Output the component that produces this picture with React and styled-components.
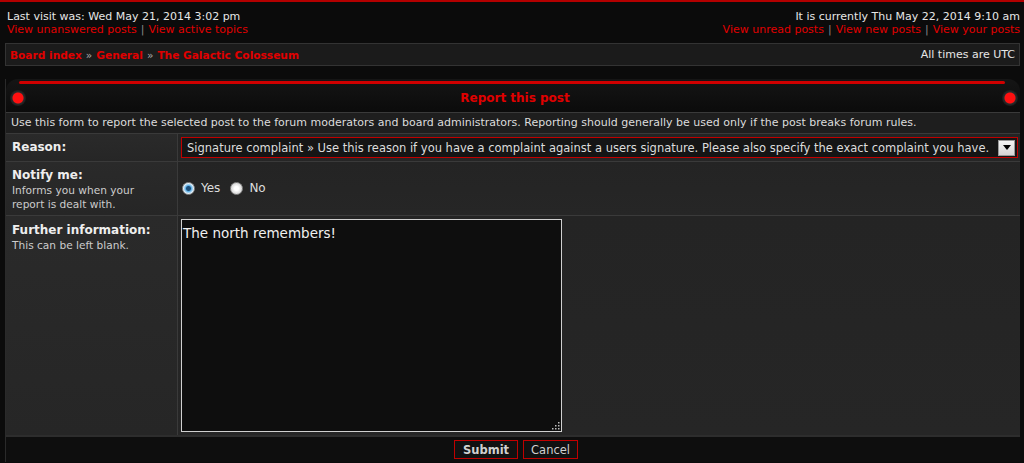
import React from "react";
import styled, { createGlobalStyle } from "styled-components";

const Global = createGlobalStyle`
  html, body { margin: 0; padding: 0; background: #0b0b0b; }
  body { font-family: "DejaVu Sans", Verdana, sans-serif; color: #e6e6e6; }
  * { box-sizing: border-box; }
`;

const Page = styled.div`
  border-top: 2px solid #b30000;
  padding: 0 4px 0 5px;
  min-height: 463px;
`;

const TopBar = styled.div`
  display: flex;
  justify-content: space-between;
  padding: 8px 0 0 2px;
  font-size: 11px;
  line-height: 13px;
`;

const Col = styled.div`
  text-align: ${(p) => p.$align || "left"};
`;

const Link = styled.a`
  color: #e00000;
  text-decoration: none;
  font-weight: ${(p) => (p.$bold ? "bold" : "normal")};
`;

const Sep = styled.span`
  color: #888;
  margin: 0 4px;
`;

const Crumbs = styled.div`
  margin-top: 7px;
  height: 23px;
  background: #1b1b1b;
  border: 1px solid #333;
  display: flex;
  align-items: center;
  justify-content: space-between;
  padding: 0 4px;
  font-size: 11px;
`;

const CrumbTrail = styled.span`
  font-size: 10.6px;
`;

const Raquo = styled.span`
  color: #aaa;
  margin: 0 4px;
`;

const Panel = styled.div`
  margin-top: 13px;
  border-left: 1px solid #2a2a2a;
`;

const PanelHead = styled.div`
  position: relative;
  height: 33px;
  border-radius: 12px 12px 0 0;
  background: linear-gradient(#151515, #0b0b0b);
  display: grid;
  grid-template-columns: 24px 1fr 20px;
  align-items: center;
  padding-top: 5px;
  &::before {
    content: "";
    position: absolute;
    left: 13px;
    right: 15px;
    top: 2px;
    height: 3px;
    border-radius: 2px;
    background: #d00000;
  }
`;

const Dot = styled.span`
  justify-self: center;
  width: 16px;
  height: 16px;
  border-radius: 50%;
  background: radial-gradient(circle, #ff1010 0 5px, #2a2a2a 6px, #1a1a1a 8px);
`;

const Title = styled.div`
  text-align: center;
  color: #e00000;
  font-weight: bold;
  font-size: 12px;
`;

const Table = styled.div`
  display: grid;
  grid-template-columns: 171px 1fr;
  background: #3a3a3a;
  gap: 1px;
  border-top: 1px solid #3a3a3a;
`;

const Intro = styled.div`
  grid-column: 1 / -1;
  background: #1e1e1e;
  font-size: 11px;
  padding: 3px 5px;
  height: 20px;
  color: #dcdcdc;
  white-space: nowrap;
`;

const Label = styled.div`
  background: linear-gradient(#2a2a2a, #262626);
  padding: ${(p) => p.$pad || "5px 6px"};
  height: ${(p) => p.$h}px;
`;

const LabelTitle = styled.div`
  font-weight: bold;
  font-size: 12px;
  color: #eee;
  line-height: 15px;
`;

const LabelNote = styled.div`
  font-size: 10.6px;
  color: #ccc;
  line-height: 14px;
`;

const Value = styled.div`
  background: linear-gradient(#242424, #262626);
  padding: ${(p) => p.$pad || "3px 2px 3px 3px"};
  height: ${(p) => p.$h}px;
  display: flex;
  align-items: flex-start;
`;

const Select = styled.div`
  flex: 1;
  height: 21px;
  border: 1px solid #c00000;
  background: #151515;
  display: flex;
  align-items: center;
  padding: 0 2px 0 5px;
  font-size: 11.5px;
  color: #ddd;
  white-space: nowrap;
  overflow: hidden;
`;

const SelectText = styled.span`
  flex: 1;
  overflow: hidden;
`;

const Arrow = styled.span`
  width: 17px;
  height: 16px;
  background: linear-gradient(#f4f4f4, #d6d6d6);
  border: 1px solid #999;
  display: flex;
  align-items: center;
  justify-content: center;
  &::after {
    content: "";
    border-left: 4px solid transparent;
    border-right: 4px solid transparent;
    border-top: 5px solid #000;
  }
`;

const Radios = styled.div`
  display: flex;
  align-items: center;
  gap: 6px;
  font-size: 12px;
  color: #ddd;
  margin-top: 16px;
  margin-left: 1px;
`;

const Radio = styled.span`
  width: 13px;
  height: 13px;
  border-radius: 50%;
  border: 1px solid #8a8a8a;
  background: ${(p) =>
    p.$checked
      ? "radial-gradient(circle, #1d4f7a 0 2px, #5fb0e6 3px, #dfeef8 5px)"
      : "radial-gradient(circle, #ffffff 0 2px, #d0d0d0 6px)"};
`;

const RadioLabel = styled.span`
  margin-right: 4px;
`;

const TextArea = styled.div`
  width: 381px;
  height: 213px;
  background: #0e0e0e;
  border: 1px solid #d0d0d0;
  position: relative;
  padding: 5px 1px;
  font-size: 13.5px;
  color: #f0f0f0;
`;

const Grip = styled.svg`
  position: absolute;
  right: 1px;
  bottom: 1px;
`;

const Footer = styled.div`
  border-top: 2px solid #2d2d2d;
  background: #0e0e0e;
  height: 27px;
  display: flex;
  justify-content: center;
  align-items: center;
  gap: 5px;
  padding-left: 6px;
`;

const Button = styled.button`
  font-family: inherit;
  font-size: 11.5px;
  font-weight: ${(p) => (p.$bold ? "bold" : "normal")};
  color: #d0d0d0;
  background: #111;
  border: 1px solid #c00000;
  height: 19px;
  padding: 0 ${(p) => (p.$bold ? 8 : 7)}px;
  cursor: pointer;
`;

export default function App() {
  return (
    <>
      <Global />
      <Page>
        <TopBar>
          <Col>
            <div>Last visit was: Wed May 21, 2014 3:02 pm</div>
            <div>
              <Link href="#">View unanswered posts</Link>
              <Sep>|</Sep>
              <Link href="#">View active topics</Link>
            </div>
          </Col>
          <Col $align="right">
            <div>It is currently Thu May 22, 2014 9:10 am</div>
            <div>
              <Link href="#">View unread posts</Link>
              <Sep>|</Sep>
              <Link href="#">View new posts</Link>
              <Sep>|</Sep>
              <Link href="#">View your posts</Link>
            </div>
          </Col>
        </TopBar>
        <Crumbs>
          <CrumbTrail>
            <Link $bold href="#">Board index</Link>
            <Raquo>»</Raquo>
            <Link $bold href="#">General</Link>
            <Raquo>»</Raquo>
            <Link $bold href="#">The Galactic Colosseum</Link>
          </CrumbTrail>
          <span>All times are UTC</span>
        </Crumbs>
        <Panel>
          <PanelHead>
            <Dot />
            <Title>Report this post</Title>
            <Dot />
          </PanelHead>
          <Table>
            <Intro>
              Use this form to report the selected post to the forum moderators and board administrators. Reporting should generally be used only if the post breaks forum rules.
            </Intro>
            <Label $h={27} $pad="6px 6px">
              <LabelTitle>Reason:</LabelTitle>
            </Label>
            <Value $h={27}>
              <Select>
                <SelectText>
                  Signature complaint » Use this reason if you have a complaint against a users signature. Please also specify the exact complaint you have.
                </SelectText>
                <Arrow />
              </Select>
            </Value>
            <Label $h={53} $pad="6px 6px">
              <LabelTitle>Notify me:</LabelTitle>
              <LabelNote>
                Informs you when your
                <br />
                report is dealt with.
              </LabelNote>
            </Label>
            <Value $h={53}>
              <Radios>
                <Radio $checked />
                <RadioLabel>Yes</RadioLabel>
                <Radio />
                <RadioLabel>No</RadioLabel>
              </Radios>
            </Value>
            <Label $h={219} $pad="7px 6px">
              <LabelTitle>Further information:</LabelTitle>
              <LabelNote>This can be left blank.</LabelNote>
            </Label>
            <Value $h={219}>
              <TextArea>
                The north remembers!
                <Grip width="10" height="10" viewBox="0 0 10 10">
                  <g fill="#bbb">
                    <rect x="8" y="2" width="1.5" height="1.5" />
                    <rect x="5" y="5" width="1.5" height="1.5" />
                    <rect x="8" y="5" width="1.5" height="1.5" />
                    <rect x="2" y="8" width="1.5" height="1.5" />
                    <rect x="5" y="8" width="1.5" height="1.5" />
                    <rect x="8" y="8" width="1.5" height="1.5" />
                  </g>
                </Grip>
              </TextArea>
            </Value>
          </Table>
          <Footer>
            <Button $bold>Submit</Button>
            <Button>Cancel</Button>
          </Footer>
        </Panel>
      </Page>
    </>
  );
}
